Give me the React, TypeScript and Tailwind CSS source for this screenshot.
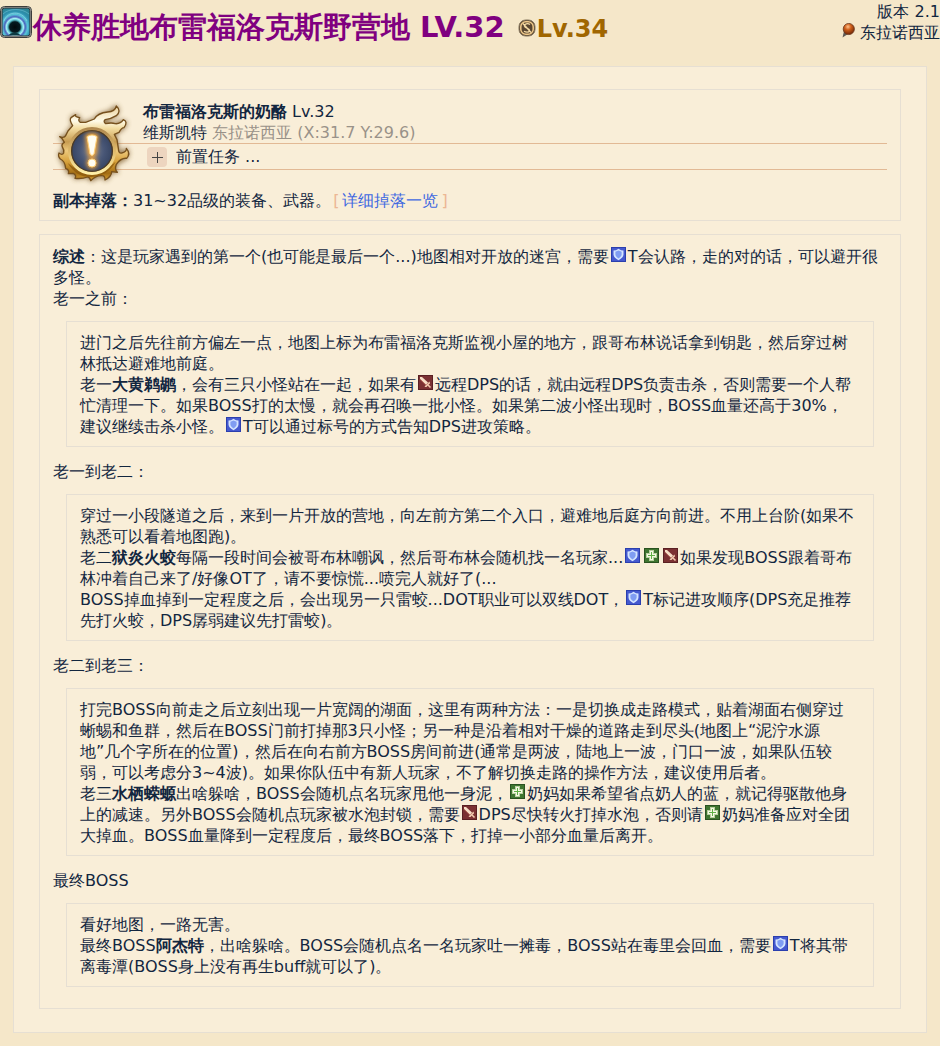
import type { ReactNode } from "react";

function TankIcon() {
  return (
    <svg role="img" aria-label="坦克" viewBox="0 0 15 15" className="mx-0.5 inline-block size-[15px] align-baseline">
      <rect width="15" height="15" fill="#2b3fae" />
      <rect x="1" y="1" width="13" height="13" fill="#4559cf" />
      <path d="M2.500 3.500 5 3.200 7.500 1.800l2.500 1.400 2.500.3v4c0 2.500-2.300 4.200-5 5.800-2.700-1.600-5-3.300-5-5.800Z" fill="#d3e4ff" />
      <path d="M4.400 4.800 7.500 3.500 10.600 4.800v2.700c0 1.500-1.300 2.700-3.100 3.900C5.700 10.200 4.400 9 4.400 7.500Z" fill="#7f9df2" />
    </svg>
  );
}

function HealerIcon() {
  return (
    <svg role="img" aria-label="治疗" viewBox="0 0 15 15" className="mx-0.5 inline-block size-[15px] align-baseline">
      <rect width="15" height="15" fill="#2a5220" />
      <rect x="1" y="1" width="13" height="13" fill="#3f7530" />
      <path d="M5 2h5v3h3v5h-3v3H5v-3H2V5h3Z" fill="#b9d0a0" />
      <path d="M6 3h3v3h3v3H9v3H6V9H3V6h3Z" fill="#f6f9e4" />
      <path d="M7.500 4v7M4 7.500h7" stroke="#5fb045" strokeWidth="1" />
    </svg>
  );
}

function DpsIcon() {
  return (
    <svg role="img" aria-label="输出" viewBox="0 0 15 15" className="mx-0.5 inline-block size-[15px] align-baseline">
      <rect width="15" height="15" fill="#5a2023" />
      <rect x="1" y="1" width="13" height="13" fill="#7b3032" />
      <path d="M2 2h2l6 5.500L8 9.800 2 4Z" fill="#f7ddc6" />
      <path d="M2.200 4.400 7.800 10" stroke="#b9685a" strokeWidth=".9" />
      <path d="M11.800 6.500V8.500L8.500 12H6.500L7.500 10.500 10.500 7.500Z" fill="#f2c9ad" />
      <path d="m10 10 2.500 2.500" stroke="#f2c9ad" strokeWidth="1.600" />
    </svg>
  );
}

function PortalIcon() {
  return (
    <svg aria-hidden="true" viewBox="0 0 32 32" className="size-8 shrink-0">
      <defs>
        <radialGradient id="portal" cx=".46" cy=".68" r=".75">
          <stop offset="0" stopColor="#02090c" />
          <stop offset=".25" stopColor="#041a20" />
          <stop offset=".34" stopColor="#5cc4d0" />
          <stop offset=".41" stopColor="#a5f0f5" />
          <stop offset=".49" stopColor="#4a63bd" />
          <stop offset=".6" stopColor="#58c5d8" />
          <stop offset=".75" stopColor="#2d8fae" />
          <stop offset="1" stopColor="#2a8494" />
        </radialGradient>
      </defs>
      <rect x=".5" y=".5" width="31" height="31" rx="4" fill="#c9c9c2" stroke="#3d3d3b" />
      <rect x="2" y="2" width="28" height="28" rx="2.500" fill="url(#portal)" stroke="#2c2f30" />
      <path d="M4 15C7 5 22 4 27 15" fill="none" stroke="#a9e6f5" strokeOpacity=".5" />
      <path d="M3 8C9 2 22 2 29 8" fill="none" stroke="#8bd9ea" strokeOpacity=".4" />
      <path d="M9 29C10 26 19 26 20 29Z" fill="#0b3a42" />
    </svg>
  );
}

function SyncIcon() {
  return (
    <svg aria-hidden="true" viewBox="0 0 18 18" className="mr-px ml-[13px] size-[18px] shrink-0">
      <rect x="1" y="1" width="16" height="16" rx="6.500" fill="#594631" stroke="#86765d" />
      <rect x="2.800" y="2.800" width="12.400" height="12.400" rx="5" fill="none" stroke="#efc98a" strokeWidth="1.500" />
      <path d="M12 5.500C10 4 6 4.500 6.500 7.200S12 9 11.500 11.500s-4 1.800-5.500.8M5 4.500l8 9" fill="none" stroke="#f6dca6" strokeWidth="1.300" />
    </svg>
  );
}

function PinIcon() {
  return (
    <svg aria-hidden="true" viewBox="0 0 13 15" className="mr-[5px] inline-block h-[15px] w-[13px] align-baseline">
      <defs>
        <radialGradient id="pin" cx=".42" cy=".3" r=".7">
          <stop offset="0" stopColor="#ffc28c" />
          <stop offset=".4" stopColor="#d0601b" />
          <stop offset="1" stopColor="#6f2606" />
        </radialGradient>
      </defs>
      <path d="M2 8 .5 14.500 6 11Z" fill="#5f5a55" />
      <circle cx="6.800" cy="6" r="5.600" fill="url(#pin)" stroke="#6b3a20" strokeWidth=".8" />
    </svg>
  );
}

function QuestIcon() {
  return (
    <svg aria-hidden="true" viewBox="0 0 240 240" className="absolute top-[13px] left-[13px] size-20 overflow-visible">
      <defs>
        <linearGradient id="gold" x1="0" y1="0" x2="0" y2="1">
          <stop offset="0" stopColor="#ead09a" />
          <stop offset=".2" stopColor="#fffbe8" />
          <stop offset=".3" stopColor="#f3dca0" />
          <stop offset=".48" stopColor="#c79b50" />
          <stop offset=".6" stopColor="#edc97c" />
          <stop offset=".75" stopColor="#d6a03a" />
          <stop offset=".9" stopColor="#a36d14" />
          <stop offset="1" stopColor="#d9a234" />
        </linearGradient>
        <linearGradient id="ring" x1="0" y1="0" x2="0" y2="1">
          <stop offset="0" stopColor="#b08a50" />
          <stop offset=".5" stopColor="#dfb96a" />
          <stop offset="1" stopColor="#fff0a8" />
        </linearGradient>
        <radialGradient id="disc">
          <stop offset="0" stopColor="#7b7f8c" />
          <stop offset=".55" stopColor="#485676" />
          <stop offset="1" stopColor="#33415f" />
        </radialGradient>
        <filter id="shade" x="-20%" y="-20%" width="140%" height="140%">
          <feGaussianBlur stdDeviation="8" />
        </filter>
        <filter id="glow" x="-150%" y="-30%" width="400%" height="160%">
          <feGaussianBlur stdDeviation="6" />
        </filter>
      </defs>
      <path d="M20 101 38 98 45 84 59 68 54 44 68 35 80 44 82 58 98 58 124 48 138 34 164 27 190 9 197 22 190 38 164 50 160 62 186 62 211 52 220 60 213 74 196 88 184 94 192 110 196 136 206 150 220 136 227 150 221 166 204 176 190 184 188 198 193 208 176 206 168 222 156 231 148 218 113 233 104 222 66 226 60 211 46 212 38 196 22 168 18 150 32 150 28 132 34 118Z" fill="#7d5b2c" stroke="#7d5b2c" strokeWidth="6" opacity=".75" filter="url(#shade)" />
      <path d="M20 101Q34 106 38 98L45 84 59 68Q48 50 54 44L68 35Q64 42 80 44 74 54 82 58L98 58 124 48Q134 30 164 27 186 26 190 9 206 24 190 38 174 48 156 50 150 56 158 62 176 58 186 62 202 64 211 50 226 56 213 74 206 74 198 88L184 94 192 110 196 136Q196 152 206 150 222 146 220 136 234 152 221 166 204 164 190 184 184 200 193 208L176 206Q176 220 156 231 156 218 148 218 130 216 113 233 110 222 104 222 88 228 66 226 72 216 60 211L46 212Q50 200 38 196 36 174 22 168 14 160 18 150 28 158 32 150 34 140 28 132 24 124 34 118 30 106 20 101Z" fill="url(#gold)" stroke="#76501d" strokeWidth="4" strokeLinejoin="round" />
      <path d="M44 180Q70 224 116 222 166 218 188 176 160 204 116 204 70 204 44 180Z" fill="#8d5a0c" opacity=".8" />
      <circle cx="117" cy="144" r="67" fill="url(#disc)" stroke="url(#ring)" strokeWidth="10" />
      <circle cx="117" cy="144" r="61" fill="none" stroke="#4d3a22" strokeWidth="4" />
      <g fill="#ffab35" stroke="#ffab35" strokeWidth="14" filter="url(#glow)">
        <path d="M104 100Q117 94 130 100L122 154H112Z" />
        <circle cx="117" cy="181" r="9" />
      </g>
      <g fill="#fffdf2" stroke="#ffd27a" strokeWidth="3">
        <path d="M102 101Q117 91 132 101L123 153Q117 162 111 153Z" />
        <circle cx="117" cy="180" r="12" />
      </g>
    </svg>
  );
}

function Panel({ children }: { children: ReactNode }) {
  return <section className="relative mx-[13px] border border-[#e6dfd3] px-[13px] pt-[11px] pb-[9px]">{children}</section>;
}

function Stage({ children }: { children: ReactNode }) {
  return (
    <div className="mx-[13px] mt-3 mb-[14px] border border-[#e6dfd3] pt-2.5 pr-[15px] pb-[9px] pl-[13px] last:mb-3">
      {children}
    </div>
  );
}

export default function App() {
  return (
    <div className="min-h-screen bg-[#f5e7c9] pb-[13px] font-['DejaVu_Sans',sans-serif] text-base leading-[21px] text-[#12263f]">
      <header className="flex h-[66px] items-start justify-between">
        <div className="flex pt-1.5">
          <PortalIcon />
          <h1 className="ml-px flex items-baseline font-bold leading-[42px] text-[#800080]">
            <span className="text-[29px]">休养胜地布雷福洛克斯野营地 LV.32</span>
            <SyncIcon />
            <span className="text-2xl leading-[42px] text-[#a06600]">Lv.34</span>
          </h1>
        </div>
        <div className="pt-px text-right">
          <p>版本 2.1</p>
          <p>
            <PinIcon />
            东拉诺西亚
          </p>
        </div>
      </header>

      <main className="mx-[13px] flex flex-col gap-[13px] border border-[#e6dfd3] bg-[#f9eed8] px-3 pt-[22px] pb-[23px]">
        <Panel>
          <div className="pl-[90px]">
            <p>
              <b>布雷福洛克斯的奶酪</b> Lv.32
            </p>
            <p>
              维斯凯特 <span className="text-[#999289]">东拉诺西亚 (X:31.7 Y:29.6)</span>
            </p>
          </div>
          <div className="flex h-[27px] items-center gap-[9px] border-y border-[#e2b995] pl-[94px]">
            <button
              type="button"
              aria-label="展开前置任务"
              className="flex size-5 items-center justify-center rounded bg-[#edd5bf] text-[#444]"
            >
              <svg aria-hidden="true" viewBox="0 0 12 12" className="size-3">
                <path d="M6.500 1v11M1 6.500h11" stroke="currentColor" />
              </svg>
            </button>
            <span>前置任务 ...</span>
          </div>
          <QuestIcon />
          <p className="mt-5">
            <b>副本掉落：</b>31~32品级的装备、武器。
            <span className="ml-0.5 text-[#ecb794]">
              [
              <a href="#drops" className="mx-[3px] text-[#4169e1]">
                详细掉落一览
              </a>
              ]
            </span>
          </p>
        </Panel>

        <Panel>
          <p>
            <b>综述</b>：这是玩家遇到的第一个(也可能是最后一个...)地图相对开放的迷宫，需要
            <TankIcon />
            T会认路，走的对的话，可以避开很多怪。
          </p>
          <p>老一之前：</p>
          <Stage>
            <p>
              进门之后先往前方偏左一点，地图上标为布雷福洛克斯监视小屋的地方，跟哥布林说话拿到钥匙，然后穿过树林抵达避难地前庭。
            </p>
            <p>
              老一<b>大黄鹈鹕</b>，会有三只小怪站在一起，如果有
              <DpsIcon />
              远程DPS的话，就由远程DPS负责击杀，否则需要一个人帮忙清理一下。如果BOSS打的太慢，就会再召唤一批小怪。如果第二波小怪出现时，BOSS血量还高于30%，建议继续击杀小怪。
              <TankIcon />
              T可以通过标号的方式告知DPS进攻策略。
            </p>
          </Stage>
          <p>老一到老二：</p>
          <Stage>
            <p>
              穿过一小段隧道之后，来到一片开放的营地，向左前方第二个入口，避难地后庭方向前进。不用上台阶(如果不熟悉可以看着地图跑)。
            </p>
            <p>
              老二<b>狱炎火蛟</b>每隔一段时间会被哥布林嘲讽，然后哥布林会随机找一名玩家...
              <TankIcon />
              <HealerIcon />
              <DpsIcon />
              如果发现BOSS跟着哥布林冲着自己来了/好像OT了，请不要惊慌...喷完人就好了(...
            </p>
            <p>
              BOSS掉血掉到一定程度之后，会出现另一只雷蛟...DOT职业可以双线DOT，
              <TankIcon />
              T标记进攻顺序(DPS充足推荐先打火蛟，DPS孱弱建议先打雷蛟)。
            </p>
          </Stage>
          <p>老二到老三：</p>
          <Stage>
            <p>
              打完BOSS向前走之后立刻出现一片宽阔的湖面，这里有两种方法：一是切换成走路模式，贴着湖面右侧穿过蜥蜴和鱼群，然后在BOSS门前打掉那3只小怪；另一种是沿着相对干燥的道路走到尽头(地图上“泥泞水源地”几个字所在的位置)，然后在向右前方BOSS房间前进(通常是两波，陆地上一波，门口一波，如果队伍较弱，可以考虑分3~4波)。如果你队伍中有新人玩家，不了解切换走路的操作方法，建议使用后者。
            </p>
            <p>
              老三<b>水栖蝾螈</b>出啥躲啥，BOSS会随机点名玩家甩他一身泥，
              <HealerIcon />
              奶妈如果希望省点奶人的蓝，就记得驱散他身上的减速。另外BOSS会随机点玩家被水泡封锁，需要
              <DpsIcon />
              DPS尽快转火打掉水泡，否则请
              <HealerIcon />
              奶妈准备应对全团大掉血。BOSS血量降到一定程度后，最终BOSS落下，打掉一小部分血量后离开。
            </p>
          </Stage>
          <p>最终BOSS</p>
          <Stage>
            <p>看好地图，一路无害。</p>
            <p>
              最终BOSS<b>阿杰特</b>，出啥躲啥。BOSS会随机点名一名玩家吐一摊毒，BOSS站在毒里会回血，需要
              <TankIcon />
              T将其带离毒潭(BOSS身上没有再生buff就可以了)。
            </p>
          </Stage>
        </Panel>
      </main>
    </div>
  );
}
